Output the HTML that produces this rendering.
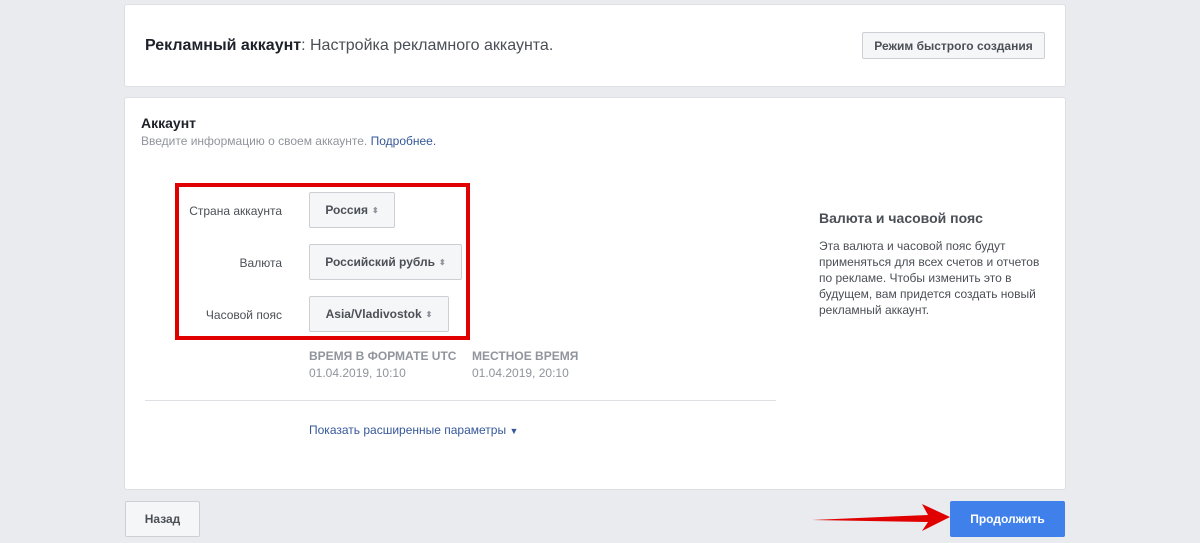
<!DOCTYPE html><html><head><meta charset="utf-8"><style>
*{box-sizing:border-box;margin:0;padding:0}
body{width:1200px;height:543px;background:#e9ebee;font-family:"Liberation Sans",Arial,sans-serif;position:relative;overflow:hidden;color:#1d2129}
.card{position:absolute;background:#fff;border:1px solid #dddfe2;border-radius:3px}
.abs{position:absolute;white-space:nowrap}
.sel{position:absolute;background:#f5f6f7;border:1px solid #ccd0d5;border-radius:2px;font-size:12px;font-weight:bold;color:#4b4f56;display:flex;align-items:center;justify-content:center}
.lbl{position:absolute;font-size:12px;color:#4b4f56;text-align:right;width:110px}
.ar{font-size:8px;color:#90949c;margin-left:4px}
</style></head><body>
<div class="card" style="left:124px;top:4px;width:942px;height:83px"></div>
<div class="abs" style="left:145px;top:37px;font-size:16px"><b>Рекламный аккаунт</b><span style="color:#4b4f56">: Настройка рекламного аккаунта.</span></div>
<div class="sel" style="left:862px;top:32px;width:183px;height:27px">Режим быстрого создания</div>
<div class="card" style="left:124px;top:97px;width:942px;height:393px"></div>
<div class="abs" style="left:141px;top:115px;font-size:14px;font-weight:bold">Аккаунт</div>
<div class="abs" style="left:141px;top:134px;font-size:12px;color:#90949c">Введите информацию о своем аккаунте. <span style="color:#365899">Подробнее.</span></div>
<div class="abs" style="left:175px;top:183px;width:295px;height:157px;border:4px solid #e00000"></div>
<div class="lbl" style="left:172px;top:204px">Страна аккаунта</div>
<div class="sel" style="left:309px;top:192px;width:86px;height:36px">Россия<span class="ar">⬍</span></div>
<div class="lbl" style="left:172px;top:256px">Валюта</div>
<div class="sel" style="left:309px;top:244px;width:153px;height:36px">Российский рубль<span class="ar">⬍</span></div>
<div class="lbl" style="left:172px;top:308px">Часовой пояс</div>
<div class="sel" style="left:309px;top:296px;width:140px;height:36px">Asia/Vladivostok<span class="ar">⬍</span></div>
<div class="abs" style="left:309px;top:349px;font-size:12px;font-weight:bold;color:#90949c">ВРЕМЯ В ФОРМАТЕ UTC</div>
<div class="abs" style="left:309px;top:366px;font-size:12px;color:#90949c">01.04.2019, 10:10</div>
<div class="abs" style="left:472px;top:349px;font-size:12px;font-weight:bold;color:#90949c">МЕСТНОЕ ВРЕМЯ</div>
<div class="abs" style="left:472px;top:366px;font-size:12px;color:#90949c">01.04.2019, 20:10</div>
<div class="abs" style="left:145px;top:400px;width:631px;height:1px;background:#dddfe2"></div>
<div class="abs" style="left:309px;top:423px;font-size:12px;color:#365899">Показать расширенные параметры <span style="font-size:9px">▼</span></div>
<div class="abs" style="left:819px;top:210px;font-size:14px;font-weight:bold;color:#4b4f56">Валюта и часовой пояс</div>
<div class="abs" style="left:819px;top:238px;font-size:12px;line-height:16px;color:#4b4f56;white-space:normal;width:230px">Эта валюта и часовой пояс будут применяться для всех счетов и отчетов по рекламе. Чтобы изменить это в будущем, вам придется создать новый рекламный аккаунт.</div>
<div class="sel" style="left:125px;top:501px;width:75px;height:36px;background:#f5f6f7">Назад</div>
<svg class="abs" style="left:810px;top:500px" width="140" height="35"><path d="M2 20 L118 15 L112 4 L140 17 L112 31 L118 22 Z" fill="#e00000"/></svg>
<div class="abs" style="left:950px;top:501px;width:115px;height:36px;background:#4080ea;border-radius:2px;color:#fff;font-size:12px;font-weight:bold;display:flex;align-items:center;justify-content:center">Продолжить</div>
</body></html>
